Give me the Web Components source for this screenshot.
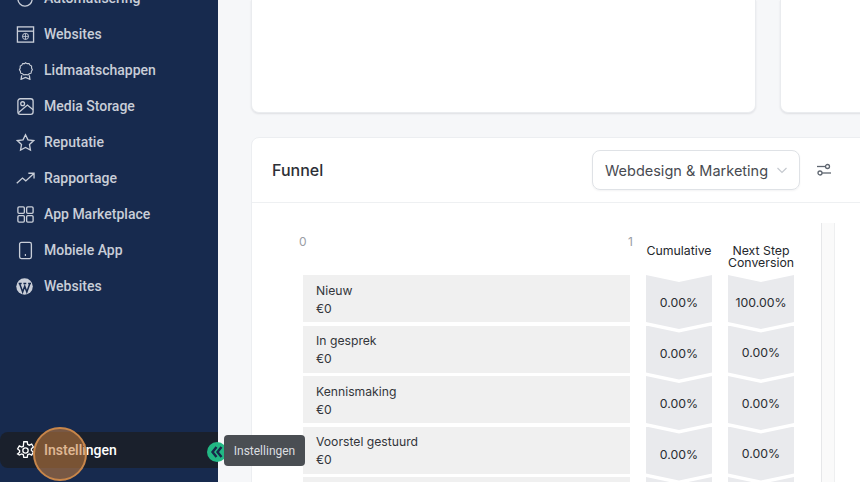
<!DOCTYPE html>
<html>
<head>
<meta charset="utf-8">
<style>
    html, body { margin: 0; height: 482px; overflow: hidden; background: #f6f7f9; }
    body { display: flex; font-family: Inter, sans-serif; }
</style>
</head>
<body>
<side-bar>
    <nav-item label="Automatisering"><svg viewBox="0 0 20 20"><path d="M9 3a7.500 7.500 0 1 0 8 8M12.500 5l-3 3 3 3"/></svg></nav-item>
    <nav-item label="Websites"><svg viewBox="0 0 20 20"><rect x="1.500" y="2" width="17" height="16"/><path d="M1.500 6.500h17"/><circle cx="10" cy="12" r="3.200" stroke-width="1"/><path d="M6.800 12h6.400M10 8.800v6.400" stroke-width=".9"/></svg></nav-item>
    <nav-item label="Lidmaatschappen"><svg viewBox="0 0 20 20"><path d="M10 1.500l2.100 1.100 2.400-.1 1.200 2 2 1.300v2.400l1 2.100-1.200 2-.4 2.400-2.300.7-1.800 1.500-2.500-.5-2.500.5-1.800-1.500-2.300-.7-.4-2.400-1.200-2 1-2.100V5.800l2-1.300 1.200-2 2.400.1z" transform="translate(1.700 .6) scale(.83)"/><path d="M6 15l-.6 4.200L10 17.300l4.600 1.900L14 15"/></svg></nav-item>
    <nav-item label="Media Storage"><svg viewBox="0 0 20 20"><rect x="2" y="1.800" width="16" height="16.400" rx="2.500"/><circle cx="7" cy="7" r="2"/><path d="M2.500 16.500l9.500-8 6 5"/></svg></nav-item>
    <nav-item label="Reputatie"><svg viewBox="0 0 20 20"><path d="M10 1.800l2.600 5.400 5.900.8-4.300 4.100 1 5.900-5.200-2.800-5.200 2.800 1-5.900L1.500 8l5.900-.8z"/></svg></nav-item>
    <nav-item label="Rapportage"><svg viewBox="0 0 20 20"><path d="M.8 15l6-5.500 3.500 3L18.500 5M13 4.500h6v5.500"/></svg></nav-item>
    <nav-item label="App Marketplace"><svg viewBox="0 0 20 20"><rect x="2" y="2" width="6.800" height="6.800" rx="1.200"/><rect x="11.200" y="2" width="6.800" height="6.800" rx="1.200"/><rect x="2" y="11.200" width="6.800" height="6.800" rx="1.200"/><rect x="11.200" y="11.200" width="6.800" height="6.800" rx="1.200"/></svg></nav-item>
    <nav-item label="Mobiele App"><svg viewBox="0 0 20 20"><rect x="3.800" y="1.500" width="12.400" height="17" rx="1.800"/><path d="M9.300 14.800h1.200" stroke-width="2"/></svg></nav-item>
    <nav-item label="Websites"><svg viewBox="0 0 20 20" style="overflow:visible"><circle cx="9" cy="10" r="8.700" fill="#c9ced8" stroke="none"/><path d="M3.800 6.800l3.200 9 2.200-6 2.200 6 3.200-9M2.800 6.800h3.200M7.800 6.800h3M12.800 6.800h3" stroke="#172a4e" stroke-width="1.600"/></svg></nav-item>
    <nav-item slot="bottom" label="Instellingen" active><svg viewBox="0 0 20 20" style="overflow:visible"><circle cx="10" cy="10" r="2.800"/><path d="M8.200.8h3.600l.5 2.700 1.700.9 2.500-1.200 1.800 3.100-2.100 1.800v1.800l2.100 1.800-1.800 3.100-2.500-1.200-1.700.9-.5 2.700H8.200l-.5-2.700-1.700-.9-2.500 1.200L1.700 13.700l2.100-1.800V10.100L1.700 8.300l1.800-3.100 2.500 1.200 1.700-.9z"/></svg></nav-item>
</side-bar>
<main-area>
    <top-cards></top-cards>
    <funnel-card title="Funnel" pipeline="Webdesign &amp; Marketing">
        <funnel-row name="Nieuw" amount="€0" cumulative="0.00%" next="100.00%"></funnel-row>
        <funnel-row name="In gesprek" amount="€0" cumulative="0.00%" next="0.00%"></funnel-row>
        <funnel-row name="Kennismaking" amount="€0" cumulative="0.00%" next="0.00%"></funnel-row>
        <funnel-row name="Voorstel gestuurd" amount="€0" cumulative="0.00%" next="0.00%"></funnel-row>
        <funnel-row name="" amount="" cumulative="" next=""></funnel-row>
    </funnel-card>
</main-area>
<hover-overlay></hover-overlay>

<script>
class SideBar extends HTMLElement {
    connectedCallback() {
        this.attachShadow({ mode: 'open' });
        this.shadowRoot.innerHTML = `
            <style>
                :host {
                    display: flex;
                    flex-direction: column;
                    justify-content: space-between;
                    flex: 0 0 218px;
                    height: 482px;
                    background: #172a4e;
                    overflow: hidden;
                }
                #list { display: flex; flex-direction: column; margin-top: -20px; }
                #bottom { display: flex; flex-direction: column; margin-bottom: 14px; }
            </style>
            <div id="list"><slot></slot></div>
            <div id="bottom"><slot name="bottom"></slot></div>
        `;
    }
}
window.customElements.define('side-bar', SideBar);

class NavItem extends HTMLElement {
    connectedCallback() {
        this.attachShadow({ mode: 'open' });
        this.shadowRoot.innerHTML = `
            <style>
                :host {
                    display: flex;
                    align-items: center;
                    gap: 9px;
                    height: 36px;
                    padding-left: 16px;
                    color: #c9ced8;
                    font: 500 14px Roboto, sans-serif;
                }
                :host([active]) {
                    background: #1a202c;
                    color: #fff;
                    border-radius: 8px 0 0 8px;
                }
                ::slotted(svg) {
                    width: 19px;
                    height: 19px;
                    fill: none;
                    stroke: currentColor;
                    stroke-width: 1.400;
                }
            </style>
            <slot></slot>
            <span>${this.getAttribute("label")}</span>
        `;
    }
}
window.customElements.define('nav-item', NavItem);

class MainArea extends HTMLElement {
    connectedCallback() {
        this.attachShadow({ mode: 'open' });
        this.shadowRoot.innerHTML = `
            <style>
                :host {
                    display: flex;
                    flex-direction: column;
                    gap: 25px;
                    flex: 1;
                    min-width: 0;
                    height: 482px;
                    padding-left: 33px;
                    box-sizing: border-box;
                    overflow: hidden;
                }
            </style>
            <slot></slot>
        `;
    }
}
window.customElements.define('main-area', MainArea);

class TopCards extends HTMLElement {
    connectedCallback() {
        this.attachShadow({ mode: 'open' });
        this.shadowRoot.innerHTML = `
            <style>
                :host { display: flex; gap: 24px; height: 113px; flex: none; width: 700px; }
                div {
                    background: #fff;
                    border: 1px solid #eaecef;
                    border-top: 0;
                    border-radius: 0 0 8px 8px;
                    box-shadow: 0 1px 2px rgba(16, 24, 40, .1);
                    box-sizing: border-box;
                }
                #left { flex: 0 0 505px; }
                #right { flex: 0 0 171px; }
            </style>
            <div id="left"></div><div id="right"></div>
        `;
    }
}
window.customElements.define('top-cards', TopCards);

class FunnelCard extends HTMLElement {
    connectedCallback() {
        this.attachShadow({ mode: 'open' });
        this.shadowRoot.innerHTML = `
            <style>
                :host {
                    display: block;
                    flex: none;
                    width: 640px;
                    height: 400px;
                    margin-top: -1px;
                    background: #fff;
                    border: 1px solid #eceef1;
                    border-radius: 8px 8px 0 0;
                    box-sizing: border-box;
                    color: #2f3237;
                }
                header {
                    display: flex;
                    align-items: center;
                    height: 65px;
                    padding: 0 58px 0 20px;
                    border-bottom: 1px solid #eef0f2;
                    box-sizing: border-box;
                }
                h2 { margin: 0; flex: 1; font: 500 16px Inter, sans-serif; color: #2c2f36; }
                #select {
                    display: flex;
                    align-items: center;
                    justify-content: space-between;
                    width: 208px;
                    height: 40px;
                    padding: 0 11px 0 12px;
                    margin-right: 16px;
                    border: 1px solid #dfe2e6;
                    border-radius: 8px;
                    box-shadow: 0 1px 2px rgba(16, 24, 40, .05);
                    box-sizing: border-box;
                    font: 400 14.500px Inter, sans-serif;
                    color: #484b51;
                    white-space: nowrap;
                }
                #select svg { width: 12px; height: 12px; fill: none; stroke: #c5c9cf; stroke-width: 1.200; }
                #filter { width: 16px; height: 16px; fill: none; stroke: #5f6670; stroke-width: 1.300; }
                #body { display: flex; height: 334px; }
                #chart { width: 569px; flex: none; box-sizing: border-box; padding: 20px 0 0 51px; }
                #heads { display: flex; height: 52px; }
                #axis {
                    display: flex;
                    justify-content: space-between;
                    width: 334px;
                    margin-left: -4px;
                    font: 400 12px Inter, sans-serif;
                    color: #9a9ea5;
                    padding-top: 11px;
                    box-sizing: border-box;
                }
                .col {
                    width: 66px;
                    margin-left: 16px;
                    text-align: center;
                    font: 400 12.300px/12px Inter, sans-serif;
                    color: #25282d;
                    padding-top: 22px;
                    box-sizing: border-box;
                    white-space: nowrap;
                }
                #axis + .col { margin-left: 13px; }
                #rows { display: flex; flex-direction: column; gap: 3.500px; }
                #rail {
                    flex: none;
                    width: 14px;
                    height: 334px;
                    margin-top: 20px;
                    background: #fafafa;
                    border-left: 1px solid #e6e7e9;
                    border-right: 1px solid #eeeff0;
                    box-sizing: border-box;
                }
            </style>
            <header>
                <h2>${this.getAttribute("title")}</h2>
                <div id="select">
                    <span>${this.getAttribute("pipeline")}</span>
                    <svg viewBox="0 0 12 12"><path d="M1.500 4l4.500 4.500L10.500 4"/></svg>
                </div>
                <svg id="filter" viewBox="0 0 16 16"><circle cx="11.500" cy="4.500" r="2"/><path d="M1 4.500h8.500"/><circle cx="4" cy="11" r="2"/><path d="M6 11h9"/></svg>
            </header>
            <div id="body">
                <div id="chart">
                    <div id="heads">
                        <div id="axis"><span>0</span><span>1</span></div>
                        <div class="col">Cumulative</div>
                        <div class="col">Next Step<br>Conversion</div>
                    </div>
                    <div id="rows"><slot></slot></div>
                </div>
                <div id="rail"></div>
            </div>
        `;
    }
}
window.customElements.define('funnel-card', FunnelCard);

class FunnelRow extends HTMLElement {
    connectedCallback() {
        this.attachShadow({ mode: 'open' });
        this.shadowRoot.innerHTML = `
            <style>
                :host {
                    display: flex;
                    height: 47px;
                    font: 400 12.200px Inter, sans-serif;
                    color: #33363b;
                }
                #bar {
                    flex: none;
                    width: 327px;
                    background: #f0f0f0;
                    padding: 6.500px 13px;
                    box-sizing: border-box;
                    line-height: 18px;
                }
                .chevron {
                    flex: none;
                    width: 66px;
                    height: 54px;
                    margin-left: 16px;
                    background: #e9eaed;
                    display: flex;
                    align-items: center;
                    justify-content: center;
                    clip-path: polygon(0 0, 50% 7px, 100% 0, 100% 47px, 50% 54px, 0 47px);
                    font-size: 12.300px;
                    color: #2a2d32;
                }
                #cum { padding-top: 1px; box-sizing: border-box; }
            </style>
            <div id="bar">${this.getAttribute("name")}<br>${this.getAttribute("amount")}</div>
            <div class="chevron" id="cum">${this.getAttribute("cumulative")}</div>
            <div class="chevron">${this.getAttribute("next")}</div>
        `;
    }
}
window.customElements.define('funnel-row', FunnelRow);

class HoverOverlay extends HTMLElement {
    connectedCallback() {
        this.attachShadow({ mode: 'open' });
        this.shadowRoot.innerHTML = `
            <style>
                :host { display: contents; }
                #spot {
                    position: absolute;
                    left: 33px;
                    top: 427px;
                    width: 54px;
                    height: 54px;
                    box-sizing: border-box;
                    border-radius: 50%;
                    border: 2px solid #c8864a;
                    background: rgba(200, 125, 60, .55);
                }
                #collapse {
                    position: absolute;
                    left: 207px;
                    top: 442px;
                    width: 20px;
                    height: 20px;
                    border-radius: 50%;
                    background: #22b884;
                }
                #collapse svg {
                    width: 20px;
                    height: 20px;
                    fill: none;
                    stroke: #17294a;
                    stroke-width: 2.400;
                }
                #tip {
                    position: absolute;
                    left: 224px;
                    top: 435px;
                    width: 81px;
                    height: 31px;
                    border-radius: 4px;
                    background: #4a4e53;
                    color: #dcdee0;
                    font: 400 12px Roboto, sans-serif;
                    display: flex;
                    align-items: center;
                    justify-content: center;
                }
            </style>
            <div id="spot"></div>
            <div id="collapse"><svg viewBox="0 0 20 20"><path d="M9.500 5l-4 5 4 5M14.500 5l-4 5 4 5"/></svg></div>
            <div id="tip">Instellingen</div>
        `;
    }
}
window.customElements.define('hover-overlay', HoverOverlay);
</script>
</body>
</html>
